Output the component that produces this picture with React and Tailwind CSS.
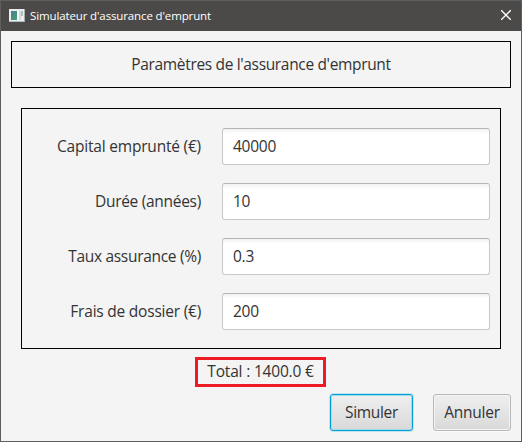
import React from "react";

const fields = [
  { label: "Capital emprunté (€)", value: "40000", tracking: "tracking-[-0.2px]" },
  { label: "Durée (années)", value: "10", tracking: "tracking-[-0.29px]" },
  { label: "Taux assurance (%)", value: "0.3", tracking: "tracking-[-0.3px]" },
  { label: "Frais de dossier (€)", value: "200", tracking: "tracking-[-0.22px]" },
];

function AppIcon() {
  return (
    <svg width="16" height="14" viewBox="0 0 16 14" shapeRendering="crispEdges">
      <defs>
        <linearGradient id="pane" x1="0" y1="0" x2="1" y2="1">
          <stop offset="0" stopColor="#4a7d9c" />
          <stop offset="1" stopColor="#43a06b" />
        </linearGradient>
      </defs>
      <rect x="0" y="0" width="16" height="13" fill="#e9edf0" />
      <rect x="0" y="12" width="16" height="1" fill="#b9bdc2" />
      <rect x="15" y="0" width="1" height="13" fill="#a9adb2" />
      <rect x="2" y="2" width="6" height="9" fill="url(#pane)" />
      <rect x="8" y="2" width="2" height="9" fill="#fafafa" />
      <rect x="10" y="2" width="2" height="9" fill="#d5d7e2" />
      <rect x="12" y="2" width="2" height="5" fill="#a9c4bd" />
      <rect x="12" y="7" width="2" height="4" fill="#eceef2" />
    </svg>
  );
}

function Field({ label, value, tracking }) {
  return (
    <div className="flex h-[37px] items-center gap-[21px]">
      <label className={`flex-1 whitespace-nowrap pb-0.5 text-right ${tracking}`}>{label}</label>
      <input
        readOnly
        value={value}
        className="h-[37px] w-[268px] rounded-[3px] border border-[#c8c8c8] border-t-[#b5b5b5] bg-white bg-linear-to-b from-[#f2f2f2] to-white to-[5px] px-[10px] pb-0.5 tracking-[-0.25px] outline-none"
      />
    </div>
  );
}

export default function App() {
  return (
    <div className="flex h-[442px] w-[522px] flex-col overflow-hidden border border-[#5e5e5e] bg-[#f4f4f4] font-['Open_Sans',sans-serif] text-[15.5px] leading-[20px] text-[#333333]">
      <header className="flex h-[30px] shrink-0 items-center bg-[#4c4a48] pl-2 pr-[10px] text-white">
        <AppIcon />
        <h1 className="ml-[5px] flex-1 whitespace-nowrap text-[11.5px] tracking-[-0.13px]">Simulateur d'assurance d'emprunt</h1>
        <svg className="mb-0.5" width="10" height="10" viewBox="0 0 10 10" stroke="currentColor" strokeWidth="1.3">
          <path d="M0 0L10 10M10 0L0 10" />
        </svg>
      </header>
      <main className="flex flex-col px-[10px] pt-[10px]">
        <h2 className="flex h-[47px] items-center justify-center border border-black pb-0.5">
          <span className="whitespace-nowrap tracking-[-0.34px]">Paramètres de l'assurance d'emprunt</span>
        </h2>
        <section className="mx-[10px] mt-5 flex h-[241px] flex-col gap-[18px] border border-black px-[10px] pt-[19px]">
          {fields.map((field) => (
            <Field key={field.label} {...field} />
          ))}
        </section>
        <div className="ml-[184px] mt-2 flex h-[30px] w-[131px] items-center justify-center border-3 border-[#ed1c24] pb-0.5">
          <span className="whitespace-nowrap tracking-[-0.18px]">Total : 1400.0 €</span>
        </div>
        <div className="mt-[7px] flex justify-end gap-5">
          <button className="h-[37px] w-[83px] rounded-[3px] border border-[#039ed3] bg-linear-to-b from-[#efefef] to-[#d9d9d9] pb-0.5 tracking-[-0.35px] shadow-[0_0_0_1px_#bfe5f2,inset_0_0_0_1px_#a5dced]">Simuler</button>
          <button className="h-[37px] w-[78px] rounded-[3px] border border-[#b9b9b9] bg-linear-to-b from-[#efefef] to-[#d9d9d9] pb-0.5 tracking-[-0.25px] shadow-[inset_0_0_0_1px_#f4f4f4,0_1px_0_#fafafa]">Annuler</button>
        </div>
      </main>
    </div>
  );
}
